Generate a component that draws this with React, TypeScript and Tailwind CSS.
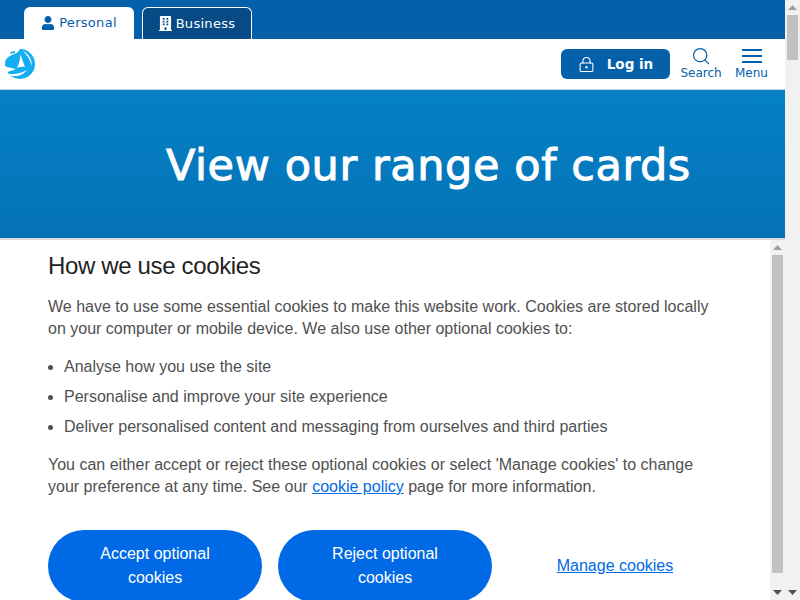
import { LockKeyhole, Search } from 'lucide-react';
import { FaUser, FaBuilding } from 'react-icons/fa';

function Triangle({ down = false }: { down?: boolean }) {
  return (
    <svg width="9" height="5" viewBox="0 0 9 5" className="fill-[#505050]">
      <polygon points={down ? '0,0 9,0 4.5,5' : '0,5 9,5 4.5,0'} />
    </svg>
  );
}

function Scrollbar({ thumbHeight }: { thumbHeight: string }) {
  return (
    <div className="w-[15px] h-full shrink-0 bg-[#f1f1f1] flex flex-col items-center">
      <div className="h-[15px] flex items-center justify-center shrink-0 opacity-50">
        <Triangle />
      </div>
      <div className={`w-[11px] bg-[#c1c1c1] shrink-0 ${thumbHeight}`} />
      <div className="flex-1" />
      <div className="h-[15px] flex items-center justify-center shrink-0">
        <Triangle down />
      </div>
    </div>
  );
}

function Logo() {
  return (
    <svg width="30" height="30" viewBox="0 0 90 90">
      <circle cx="45" cy="45" r="45" fill="#12aef0" />
      {/* white cut-outs */}
      <path d="M0 0 L44 0 C44 6 36 12 26 16 C16 20 6 25 0 36 Z" fill="#fff" />
      <path d="M46 16 L60 54 C52 52 44 54 36 56 C42 46 46 30 46 16 Z" fill="#fff" />
      <path d="M54 6 C70 14 82 30 80 50 C76 32 66 18 54 6 Z" fill="#fff" />
      <path d="M0 52 C12 56 24 58 32 60 C26 64 16 66 8 69 L0 69 Z" fill="#fff" />
      <path d="M10 74 C30 76 50 74 66 62 C56 78 36 84 18 80 Z" fill="#fff" />
      <path d="M14 10 L30 6 L30 12 L18 14 Z" fill="#12aef0" />
    </svg>
  );
}

export default function App() {
  return (
    <div className="h-screen w-full flex overflow-hidden bg-white font-['Liberation_Sans',sans-serif]">
      <div className="flex-1 min-w-0 flex flex-col">
        {/* Top tabs */}
        <div className="h-[39px] shrink-0 bg-[#0560aa] flex items-end pl-6 gap-2 font-['DejaVu_Sans',sans-serif] text-[13px] tracking-[0.3px]">
          <div className="w-[110px] h-[32px] bg-white rounded-t-md flex items-center justify-center gap-1 text-[#0560aa]">
            <FaUser className="w-[14px] h-[14px]" />
            <span>Personal</span>
          </div>
          <div className="w-[110px] h-[32px] bg-[#064a86] border border-b-0 border-white rounded-t-md flex items-center justify-center gap-1 text-white">
            <FaBuilding className="w-[13px] h-[15px]" />
            <span>Business</span>
          </div>
        </div>

        {/* Header */}
        <div className="h-[51px] shrink-0 bg-white border-b border-[#c9d3da] flex items-center justify-between pl-[5px] pr-4">
          <Logo />
          <div className="flex items-center">
            <div className="w-[109px] h-[30px] bg-[#0560aa] rounded-md flex items-center justify-center gap-3 text-white font-['DejaVu_Sans',sans-serif] font-bold text-[13.5px]">
              <LockKeyhole className="w-[17px] h-[17px]" strokeWidth={1.5} />
              <span>Log in</span>
            </div>
            <div className="ml-[10px] -mt-[2px] w-[42px] flex flex-col items-center text-[#0560aa] font-['DejaVu_Sans',sans-serif] text-xs leading-[14px]">
              <Search className="w-[20px] h-[20px]" strokeWidth={1.5} />
              <span>Search</span>
            </div>
            <div className="ml-[12px] -mt-[2px] w-[35px] flex flex-col items-center text-[#0560aa] font-['DejaVu_Sans',sans-serif] text-xs leading-[14px]">
              <div className="h-[20px] flex flex-col justify-center gap-[4px]">
                <div className="w-[20px] h-[2px] bg-[#0560aa]" />
                <div className="w-[20px] h-[2px] bg-[#0560aa]" />
                <div className="w-[20px] h-[2px] bg-[#0560aa]" />
              </div>
              <span>Menu</span>
            </div>
          </div>
        </div>

        {/* Hero */}
        <div className="h-[148px] shrink-0 bg-gradient-to-b from-[#0580c6] to-[#0573b6] flex items-center pl-[166px]">
          <h1 className="text-white font-['DejaVu_Sans',sans-serif] text-[43px] tracking-[0.6px] [-webkit-text-stroke:1px_white] leading-none mt-[2px] whitespace-nowrap">
            View our range of cards
          </h1>
        </div>

        {/* Cookie banner */}
        <div className="flex-1 min-h-0 flex border-t-2 border-[#d9d9d9] bg-white">
          <div className="flex-1 min-w-0 pl-12 pr-[48px] overflow-hidden text-[#505050] text-base leading-[22px]">
            <h2 className="mt-[13px] text-2xl leading-[26px] text-[#222222] tracking-[-0.35px]">How we use cookies</h2>
            <p className="mt-[17px]">
              We have to use some essential cookies to make this website work. Cookies are stored locally on your computer or mobile device. We also use other optional cookies to:
            </p>
            <ul className="mt-[16px] pl-4 list-disc flex flex-col gap-2">
              <li>Analyse how you use the site</li>
              <li>Personalise and improve your site experience</li>
              <li>Deliver personalised content and messaging from ourselves and third parties</li>
            </ul>
            <p className="mt-[16px]">
              You can either accept or reject these optional cookies or select 'Manage cookies' to change your preference at any time. See our{' '}
              <a className="text-[#006ae6] underline">cookie policy</a> page for more information.
            </p>
            <div className="mt-[32px] flex gap-4 items-center">
              <div className="w-[214px] h-[72px] shrink-0 rounded-[36px] bg-[#006ae6] text-white text-center leading-6 px-8 py-3">Accept optional cookies</div>
              <div className="w-[214px] h-[72px] shrink-0 rounded-[36px] bg-[#006ae6] text-white text-center leading-6 px-8 py-3">Reject optional cookies</div>
              <a className="w-[214px] text-center text-[#006ae6] underline">Manage cookies</a>
            </div>
          </div>
          <Scrollbar thumbHeight="h-[318px]" />
        </div>
      </div>
      <Scrollbar thumbHeight="h-[45px]" />
    </div>
  );
}
